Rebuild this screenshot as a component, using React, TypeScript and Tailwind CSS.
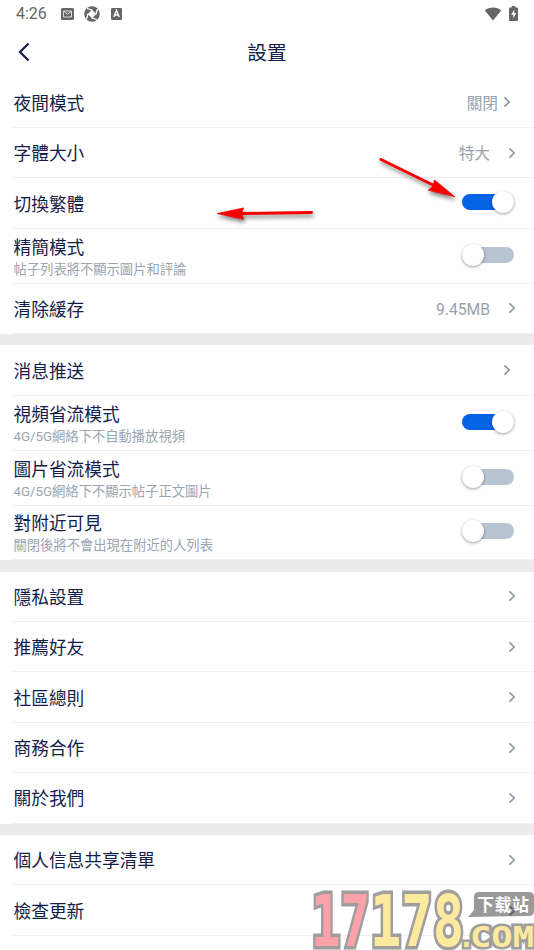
import { ReactNode, useState } from "react";

interface ISetting {
  title: string;
  hint?: string;
  value?: string;
  toggle?: boolean;
  // some rows keep their chevron a little further from the edge
  inset?: boolean;
}

const sections: ISetting[][] = [
  [
    { title: "夜間模式", value: "關閉", inset: true },
    { title: "字體大小", value: "特大" },
    { title: "切換繁體", toggle: true },
    { title: "精簡模式", hint: "帖子列表將不顯示圖片和評論", toggle: false },
    { title: "清除緩存", value: "9.45MB" },
  ],
  [
    { title: "消息推送", inset: true },
    { title: "視頻省流模式", hint: "4G/5G網絡下不自動播放視頻", toggle: true },
    { title: "圖片省流模式", hint: "4G/5G網絡下不顯示帖子正文圖片", toggle: false },
    { title: "對附近可見", hint: "關閉後將不會出現在附近的人列表", toggle: false },
  ],
  [
    { title: "隱私設置" },
    { title: "推薦好友" },
    { title: "社區總則" },
    { title: "商務合作" },
    { title: "關於我們" },
  ],
  [{ title: "個人信息共享清單" }, { title: "檢查更新" }],
];

const StatusBar = () => (
  <div className="flex h-[27px] items-center justify-between pr-4 pl-4 text-[#666]">
    <div className="flex items-center">
      <span className="w-[45px] pt-px text-[16px] leading-none">4:26</span>
      <svg width="13" height="12" viewBox="0 0 13 12">
        <rect width="13" height="12" rx="1.5" fill="currentColor" />
        <path d="M2.5 3h8v6h-8zM3 3.6l3.5 2.6L10 3.6" fill="none" stroke="#ddd" strokeWidth="1" />
      </svg>
      <svg width="16" height="16" viewBox="0 0 16 16" className="ml-[10px]">
        <circle cx="8" cy="8" r="7.8" fill="currentColor" />
        <path d="M8 3.800 12.200 8 8 12.200 3.800 8z" fill="#fff" />
        <path d="M3 2.500 8.500 4.200M13.500 3l-1.700 5.500M13 13.500l-5.500-1.700M2.500 13l1.700-5.500" stroke="#fff" strokeWidth="1.300" />
      </svg>
      <svg width="11" height="12" viewBox="0 0 11 12" className="ml-[11px]">
        <rect width="11" height="12" rx="1.2" fill="currentColor" />
        <path d="m2.8 9 2.7-6.6L8.2 9M3.8 7h3.4" fill="none" stroke="#fff" strokeWidth="1.4" />
      </svg>
    </div>
    <div className="flex items-center gap-[7px]">
      <svg width="18" height="14" viewBox="0 0 18 14">
        <path d="M.8 3.400C5.500-.4 12.500-.4 17.200 3.400L9 13.600z" fill="currentColor" />
      </svg>
      <svg width="9" height="15" viewBox="0 0 9 15">
        <path d="M2.7 0h3.6v1.4H8q1 0 1 1V14q0 1-1 1H1q-1 0-1-1V2.400q0-1 1-1h1.700z" fill="currentColor" />
        <path d="M5.300 3.500 2.200 8.800h2v3.500l3-5.200h-2z" fill="#fff" />
      </svg>
    </div>
  </div>
);

const Chevron = () => (
  <svg width="8" height="12" viewBox="0 0 8 12" className="shrink-0">
    <path d="m1.500 1.300 4.700 4.700-4.700 4.700" fill="none" stroke="#8f9aa7" strokeWidth="1.700" />
  </svg>
);

const Toggle = ({ initial }: { initial: boolean }) => {
  const [isOn, setIsOn] = useState<boolean>(initial);

  return (
    <button
      onClick={() => setIsOn(!isOn)}
      className={`mb-[2px] flex h-4 w-[52px] items-center rounded-full ${
        isOn ? "justify-end bg-[#0362e6]" : "justify-start bg-[#b9c4d3]"
      }`}
    >
      <span className="h-[22px] w-[22px] shrink-0 rounded-full bg-white shadow-[0_1px_3px_rgba(0,0,0,0.4)]" />
    </button>
  );
};

const SettingRow = ({ item }: { item: ISetting }) => {
  const isToggle = item.toggle !== undefined;

  let control: ReactNode = (
    <>
      {item.value && <span className="pt-[2px] text-[15.7px] text-[#96a1ad]">{item.value}</span>}
      <Chevron />
    </>
  );
  if (item.toggle !== undefined) control = <Toggle initial={item.toggle} />;

  return (
    <li
      className={`ml-[13px] flex items-center justify-between border-b border-[#eeeff0] ${
        item.hint ? "h-[54.9px]" : "h-[50.4px]"
      } ${isToggle ? "pr-[20.5px]" : item.inset ? "pr-[23px]" : "pr-[18px]"}`}
    >
      <div className={`flex flex-col pl-[0.5px] ${item.hint ? "pt-[5px]" : "pt-[3px]"}`}>
        <span className="text-[17.7px] leading-[22px] text-[#131d4a]">{item.title}</span>
        {item.hint && (
          <span className="text-[13.3px] leading-[21px] text-[#9aa5b0]">{item.hint}</span>
        )}
      </div>
      <div className={`flex items-center ${item.inset ? "gap-[5px]" : "gap-[18px]"}`}>{control}</div>
    </li>
  );
};

const Arrows = () => (
  <svg
    width="534"
    height="950"
    viewBox="0 0 534 950"
    className="pointer-events-none absolute top-0 left-0 drop-shadow-[1px_3px_2px_rgba(0,0,0,0.5)]"
  >
    <g fill="#f80000" stroke="#f80000" strokeLinecap="round">
      <path d="M381 159.500 436 186.500" strokeWidth="3" />
      <path d="M454.500 196.500 434.500 180 433 186 428.500 190z" strokeWidth=".8" />
      <path d="M311.500 212.500 240 213.500" strokeWidth="3" />
      <path d="M217.500 213.500 243.500 208 241.500 213 243.500 219z" strokeWidth=".8" />
    </g>
  </svg>
);

const Watermark = () => (
  <svg
    width="534"
    height="950"
    viewBox="0 0 534 950"
    className="pointer-events-none absolute top-0 left-0 font-['DejaVu_Sans_Mono'] font-bold"
  >
    <g stroke="#9f9e9e" strokeWidth="7" paintOrder="stroke" strokeLinejoin="miter">
      <text x="311" y="946" fontSize="72" textLength="59" lengthAdjust="spacingAndGlyphs" fill="#fda2a9">
        17
      </text>
      <text x="370" y="946" fontSize="72" textLength="94" lengthAdjust="spacingAndGlyphs" fill="#feea9e">
        178
      </text>
      <text y="947" fontSize="28" fill="#feea9e" strokeWidth="5">
        <tspan x="458">.</tspan>
        <tspan x="470" textLength="64" lengthAdjust="spacingAndGlyphs">
          COM
        </tspan>
      </text>
    </g>
    <path d="M468 917 474 910V897q0-5 5-5h50q5 0 5 5v14q0 5-5 5z" fill="#777" fillOpacity=".75" />
    <text x="477" y="911" fontSize="17" textLength="52" fill="#fff" className="font-['Noto_Sans_CJK_SC']">
      下载站
    </text>
    <path d="m509.500 906.300 4.700 4.700-4.700 4.700" fill="none" stroke="#4f565e" strokeWidth="1.700" opacity=".7" />
  </svg>
);

const App = () => {
  return (
    <div
      lang="zh-CN"
      className="relative h-[950px] w-[534px] overflow-hidden bg-white font-[Roboto,'Noto_Sans_CJK_SC',sans-serif]"
    >
      <StatusBar />
      <header className="grid h-[50.6px] grid-cols-[48px_1fr_48px] items-center text-[#131d4a]">
        <button className="pl-[18px]">
          <svg width="12" height="20" viewBox="0 0 12 20">
            <path d="M10.500 1.500 2 10l8.500 8.500" fill="none" stroke="currentColor" strokeWidth="2.200" />
          </svg>
        </button>
        <h1 className="pt-[2px] text-center text-[19.7px]">設置</h1>
      </header>
      <main className="flex flex-col gap-[11.3px] bg-[#ebebeb]">
        {sections.map((section) => (
          <ul key={section[0].title} className="bg-white">
            {section.map((item) => (
              <SettingRow key={item.title} item={item} />
            ))}
          </ul>
        ))}
      </main>
      <Arrows />
      <Watermark />
    </div>
  );
};

export default App;
